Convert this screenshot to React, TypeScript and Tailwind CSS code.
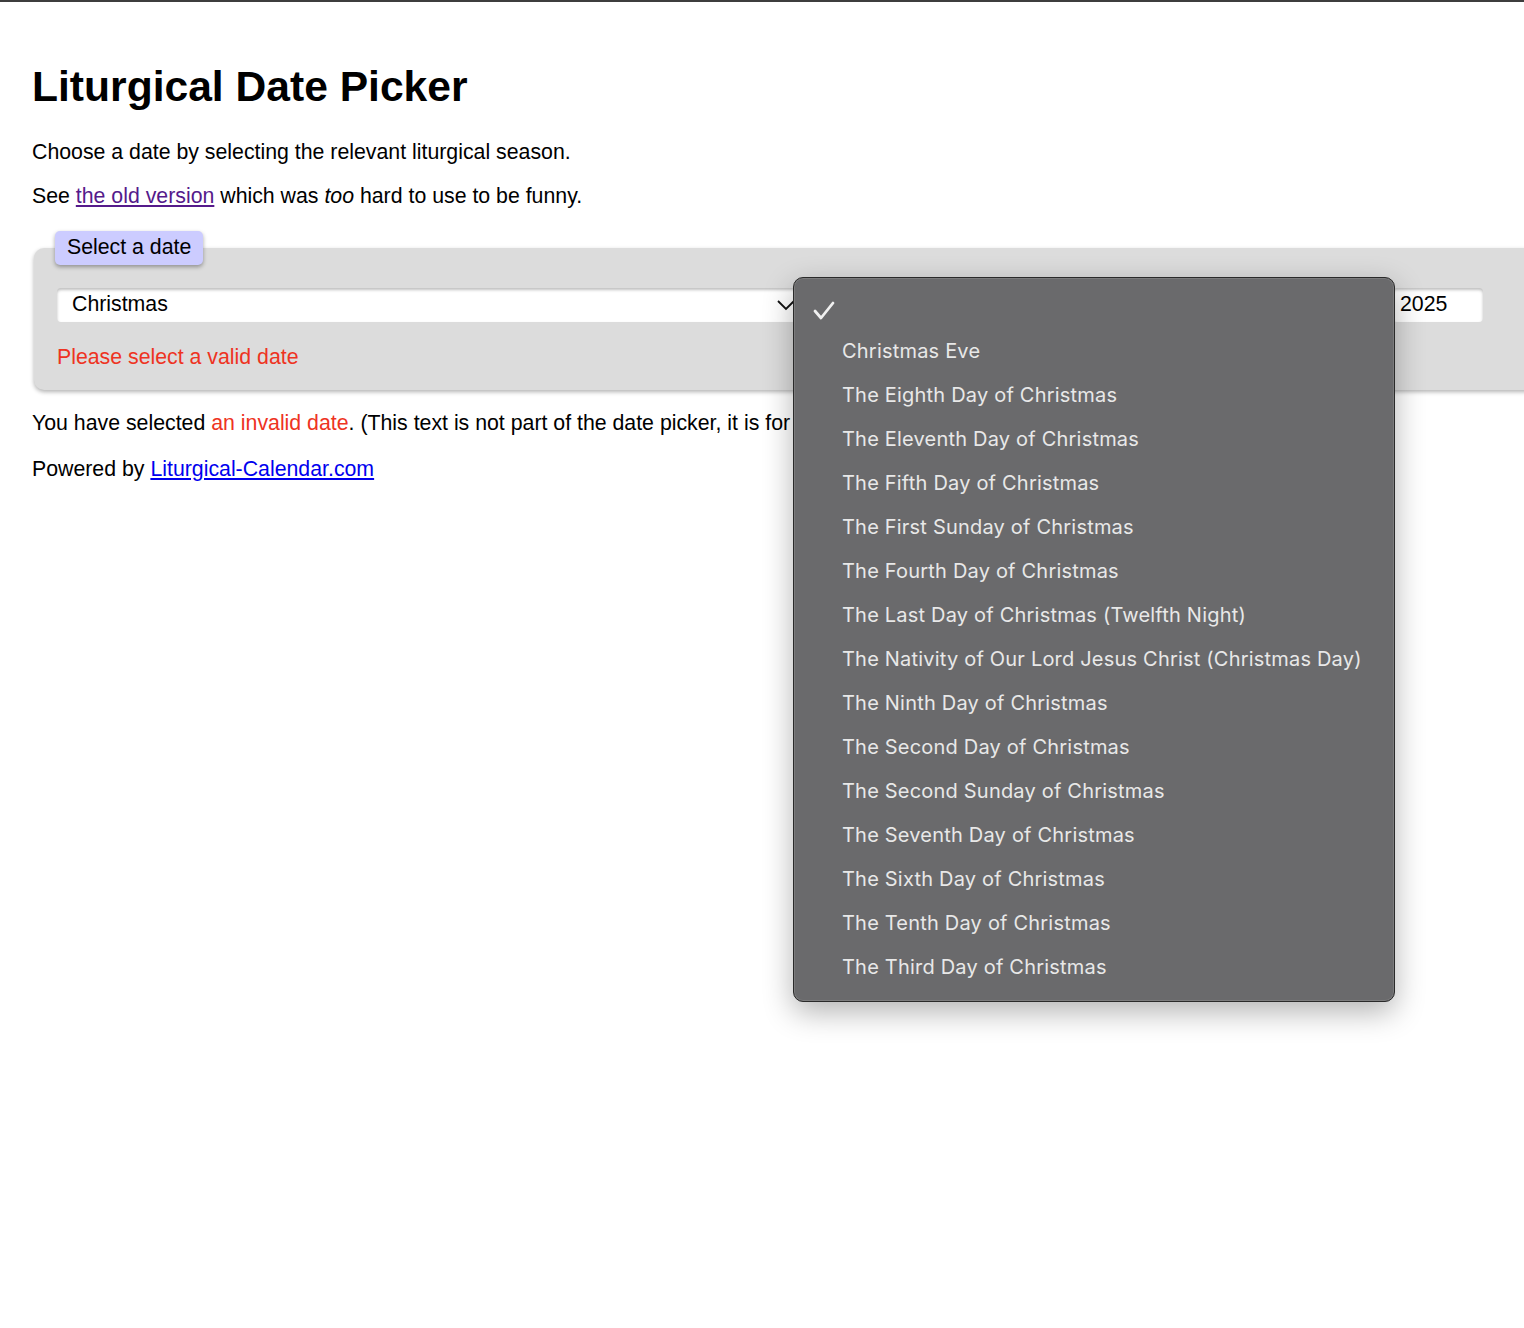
import React from "react";

const items = [
  "Christmas Eve",
  "The Eighth Day of Christmas",
  "The Eleventh Day of Christmas",
  "The Fifth Day of Christmas",
  "The First Sunday of Christmas",
  "The Fourth Day of Christmas",
  "The Last Day of Christmas (Twelfth Night)",
  "The Nativity of Our Lord Jesus Christ (Christmas Day)",
  "The Ninth Day of Christmas",
  "The Second Day of Christmas",
  "The Second Sunday of Christmas",
  "The Seventh Day of Christmas",
  "The Sixth Day of Christmas",
  "The Tenth Day of Christmas",
  "The Third Day of Christmas",
];

export default function App() {
  return (
    <div className="relative w-[1524px] h-[1328px] overflow-hidden bg-white text-black font-['Liberation_Sans',Arial,sans-serif] text-[21.3px]">
      <div className="h-[2px] bg-[#3d3d3d]" />
      <div className="pl-[32px] flex flex-col items-start">
        <h1 className="mt-[60px] text-[42.6px] leading-[49px] font-bold">Liturgical Date Picker</h1>
        <p className="mt-[29px] leading-[24px]">Choose a date by selecting the relevant liturgical season.</p>
        <p className="mt-[20px] leading-[24px]">
          See <span className="underline text-[#551a8b]">the old version</span> which was <em>too</em> hard to use to be funny.
        </p>

        <div className="relative mt-[23px] ml-[2px] w-[1540px] pt-[17px]">
          <div className="absolute left-[21px] top-0 z-10 h-[34px] px-[12px] rounded-[5px] bg-[#ccccff] shadow-[0_2px_4px_rgba(0,0,0,0.35)] flex items-center leading-none">
            Select a date
          </div>
          <div className="h-[142px] rounded-[10px] bg-[#dcdcdc] shadow-[0_2px_4px_rgba(0,0,0,0.3)] pt-[40px] pl-[23px]">
            <div className="flex items-center">
              <div className="w-[740px] h-[34px] bg-white rounded-[4px] shadow-[inset_0_2px_3px_rgba(0,0,0,0.25)] flex items-center pl-[15px] pr-[2px]">
                <span className="flex-1">Christmas</span>
                <svg width="18" height="12" viewBox="0 0 18 12">
                  <polyline points="1,2 9,10 17,2" fill="none" stroke="#111" strokeWidth="1.8" />
                </svg>
              </div>
              <div className="ml-[596px] w-[90px] h-[34px] bg-white rounded-[4px] shadow-[inset_0_2px_3px_rgba(0,0,0,0.25)] flex items-center pl-[7px]">
                2025
              </div>
            </div>
            <div className="mt-[23px] text-[#ee3322] leading-[24px]">Please select a valid date</div>
          </div>
        </div>

        <p className="mt-[21px] leading-[24px] whitespace-nowrap">
          You have selected <span className="text-[#ee3322]">an invalid date</span>. (This text is not part of the date picker, it is for
        </p>
        <p className="mt-[22px] leading-[24px]">
          Powered by <span className="underline text-[#0000ee]">Liturgical-Calendar.com</span>
        </p>
      </div>

      <div className="absolute left-[793px] top-[277px] w-[602px] h-[725px] rounded-[10px] bg-[#6a6a6c] border border-[#2a2a2a] shadow-[0_10px_30px_rgba(0,0,0,0.3),inset_0_0_0_1px_rgba(255,255,255,0.12)] font-['Inter',sans-serif] text-[#e8e8e8] text-[20px] tracking-[0.2px]">
        <div className="h-[51px] relative">
          <svg width="22" height="20" viewBox="0 0 22 20" className="absolute left-[19px] top-[23px]">
            <polyline points="2,10 8,17 20,2" fill="none" stroke="#f0f0f0" strokeWidth="2.8" strokeLinecap="round" strokeLinejoin="round" />
          </svg>
        </div>
        {items.map((t) => (
          <div key={t} className="h-[44px] pl-[48px] flex items-center leading-none">
            {t}
          </div>
        ))}
      </div>
    </div>
  );
}
